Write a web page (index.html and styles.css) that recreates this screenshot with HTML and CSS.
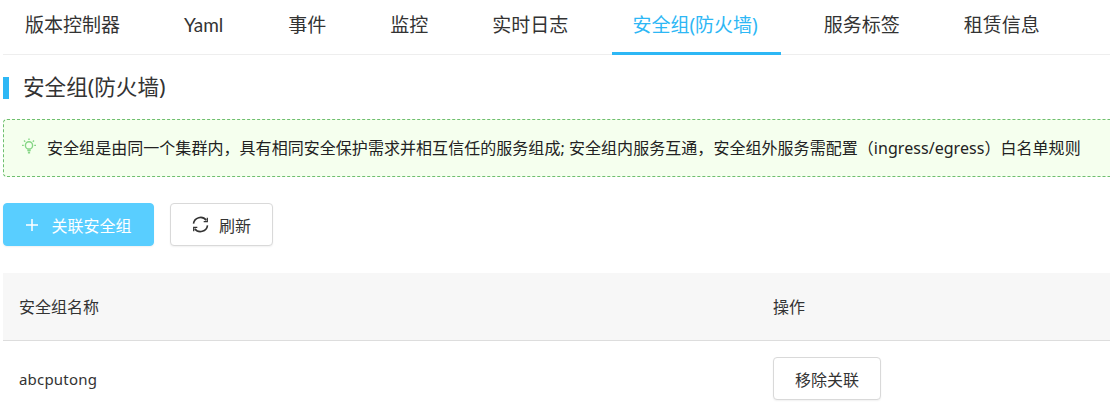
FILE: index.html
```html
<!DOCTYPE html>
<html lang="zh-CN">
<head>
<meta charset="utf-8">
<title>安全组(防火墙)</title>
<link rel="stylesheet" href="styles.css">
</head>
<body>
<div class="page">
  <nav class="tabs">
    <a class="tab">版本控制器</a>
    <a class="tab narrow">Yaml</a>
    <a class="tab">事件</a>
    <a class="tab">监控</a>
    <a class="tab">实时日志</a>
    <a class="tab active">安全组(防火墙)</a>
    <a class="tab">服务标签</a>
    <a class="tab">租赁信息</a>
  </nav>
  <h2 class="title">安全组(防火墙)</h2>
  <div class="alert">
    <svg class="bulb" width="16" height="16" viewBox="0 0 16 16" fill="none" stroke="#86d686" stroke-width="1.4">
      <circle cx="8" cy="7.4" r="3.6"/>
      <path d="M6.3 12.4h3.4M6.9 14.6h2.2" stroke-width="1.8"/>
      <path d="M8 .4v1.6M1 7.4h1.8M13.2 7.4H15M3 2.6l1.2 1.2M13 2.6l-1.2 1.2"/>
    </svg>
    <span class="alert-text">安全组是由同一个集群内，具有相同安全保护需求并相互信任的服务组成; 安全组内服务互通，安全组外服务需配置（ingress/egress）白名单规则</span>
  </div>
  <div class="actions">
    <button class="btn primary">
      <svg width="14" height="14" viewBox="0 0 14 14" stroke="#fff" stroke-width="1.5"><path d="M7 1v12M1 7h12"/></svg>
      <span>关联安全组</span>
    </button>
    <button class="btn">
      <svg width="17" height="17" viewBox="0 0 16 16" fill="none" stroke="#333" stroke-width="1.5">
        <path d="M1.4 7.2A6.7 6.7 0 0 1 13.4 4"/>
        <path d="M14.6 8.8A6.7 6.7 0 0 1 2.6 12"/>
        <path d="M14.4 1.6v3.6h-3.4M1.6 14.4v-3.6H5" stroke-width="1.2"/>
      </svg>
      <span>刷新</span>
    </button>
  </div>
  <div class="table">
    <div class="row head">
      <div class="cell name">安全组名称</div>
      <div class="cell op">操作</div>
    </div>
    <div class="row">
      <div class="cell name latin">abcputong</div>
      <div class="cell op"><button class="btn remove">移除关联</button></div>
    </div>
  </div>
</div>
</body>
</html>
```
FILE: styles.css
```css
* { box-sizing: border-box; }
html, body { margin: 0; height: 416px; overflow: hidden; background: #fff; }
body {
  font-family: "Noto Sans", "Noto Sans CJK SC", sans-serif;
  color: #333;
}
.page { padding-left: 3px; }
.tabs {
  display: flex;
  gap: 22px;
  height: 55px;
  padding-left: 1px;
  border-bottom: 1px solid #eee;
}
.tab {
  height: 55px;
  padding: 0 21px;
  font-size: 19px;
  line-height: 50px;
  color: #333;
  white-space: nowrap;
}
.tab.narrow { padding-right: 22px; font-family: Lato, "Noto Sans", sans-serif; }
.tab.active {
  margin-left: 1px;
  padding: 0 23px 0 20px;
  color: #2db7f5;
  border-bottom: 3px solid #2db7f5;
}
.title {
  margin: 22px 0 0;
  height: 22px;
  padding-left: 14px;
  border-left: 6px solid #2db7f5;
  font-size: 21.6px;
  font-weight: 400;
  line-height: 20px;
  color: #333;
}
.alert {
  display: flex;
  align-items: center;
  gap: 10px;
  height: 58px;
  margin-top: 20px;
  padding-left: 17px;
  background: #f5ffee;
  border: 1px dashed #6fbf6f;
  border-right: 0;
  border-radius: 4px 0 0 4px;
  font-size: 16px;
  color: #222;
  white-space: nowrap;
}
.alert-text { margin-top: -2px; letter-spacing: .045px; }
.bulb { flex: none; margin-top: -5px; }
.actions {
  display: flex;
  gap: 16px;
  margin-top: 26px;
}
.btn {
  display: inline-flex;
  align-items: center;
  justify-content: center;
  gap: 10px;
  height: 43px;
  width: 103px;
  padding: 0;
  background: #fff;
  border: 1px solid #d9d9d9;
  border-radius: 4px;
  box-shadow: 0 1px 2px rgba(0, 0, 0, .06);
  font-family: inherit;
  font-size: 16px;
  color: #333;
}
.btn.primary {
  width: 151px;
  gap: 12px;
  background: #59ceff;
  border-color: #59ceff;
  color: #fff;
}
.btn.remove { width: 108px; margin-top: -2px; }
.table { margin-top: 27px; }
.row { display: flex; height: 77px; align-items: center; }
.row.head {
  height: 68px;
  background: #f7f7f7;
  border-bottom: 1px solid #ddd;
  font-size: 16px;
  line-height: 20px;
}
.cell.name { width: 770px; padding-left: 16px; }
.cell.op { flex: 1; }
.latin { font-size: 15px; letter-spacing: .2px; margin-top: -2px; }
```
